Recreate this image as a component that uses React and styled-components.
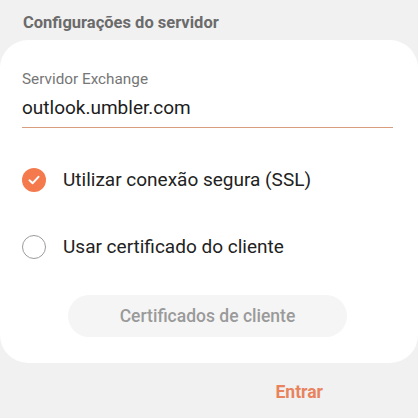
import React from 'react'
import styled, { createGlobalStyle } from 'styled-components'

const GlobalStyle = createGlobalStyle`
  html, body {
    margin: 0;
    padding: 0;
    background: #f1f1f1;
    font-family: Roboto, "Noto Sans", sans-serif;
  }
`

const Page = styled.div`
  width: 418px;
  height: 418px;
  overflow: hidden;
  display: flex;
  flex-direction: column;
`

const Header = styled.div`
  padding: 13px 23px 0;
  height: 27px;
  font-size: 16.5px;
  line-height: 20px;
  font-weight: 700;
  color: #6b6b6b;
`

const Card = styled.div`
  background: #fff;
  border-radius: 28px;
  padding: 30px 25px 26px 22px;
  display: flex;
  flex-direction: column;
`

const Field = styled.div`
  display: flex;
  flex-direction: column;
  border-bottom: 1.5px solid #d99d7e;
  padding-bottom: 7px;
`

const Label = styled.div`
  font-size: 15.3px;
  line-height: 18px;
  color: #767676;
`

const Value = styled.div`
  margin-top: 8px;
  font-size: 19px;
  line-height: 24px;
  color: #1c1c1c;
`

const Options = styled.div`
  margin-top: 27px;
  display: flex;
  flex-direction: column;
  gap: 17px;
`

const Option = styled.label`
  height: 50px;
  display: flex;
  align-items: center;
  gap: 17px;
  font-size: 19px;
  line-height: 24px;
  color: #222;
`

const Mark = styled.span`
  width: 24px;
  height: 24px;
  box-sizing: border-box;
  border-radius: 50%;
  display: flex;
  align-items: center;
  justify-content: center;
  background: ${p => (p.checked ? '#f47a4e' : '#fff')};
  border: ${p => (p.checked ? 'none' : '1.5px solid #9b9b9b')};
`

const Button = styled.div`
  margin: 23px auto 0;
  width: 279px;
  height: 42px;
  border-radius: 21px;
  background: #f5f5f5;
  display: flex;
  align-items: center;
  justify-content: center;
  font-size: 17.5px;
  color: #9a9a9a;
  font-weight: 500;
`

const Footer = styled.div`
  display: flex;
  justify-content: flex-end;
  padding: 18px 95px 0 0;
`

const Action = styled.div`
  font-size: 17.5px;
  line-height: 22px;
  font-weight: 700;
  color: #e8835e;
`

const Check = () => (
  <svg width="14" height="14" viewBox="0 0 14 14">
    <path d="M2.5 7.3 L5.7 10.2 L11.5 3.8" fill="none" stroke="#fff" strokeWidth="2" strokeLinecap="round" strokeLinejoin="round" />
  </svg>
)

export default function App() {
  return (
    <Page>
      <GlobalStyle />
      <Header>Configurações do servidor</Header>
      <Card>
        <Field>
          <Label>Servidor Exchange</Label>
          <Value>outlook.umbler.com</Value>
        </Field>
        <Options>
          <Option>
            <Mark checked><Check /></Mark>
            Utilizar conexão segura (SSL)
          </Option>
          <Option>
            <Mark />
            Usar certificado do cliente
          </Option>
        </Options>
        <Button>Certificados de cliente</Button>
      </Card>
      <Footer>
        <Action>Entrar</Action>
      </Footer>
    </Page>
  )
}
